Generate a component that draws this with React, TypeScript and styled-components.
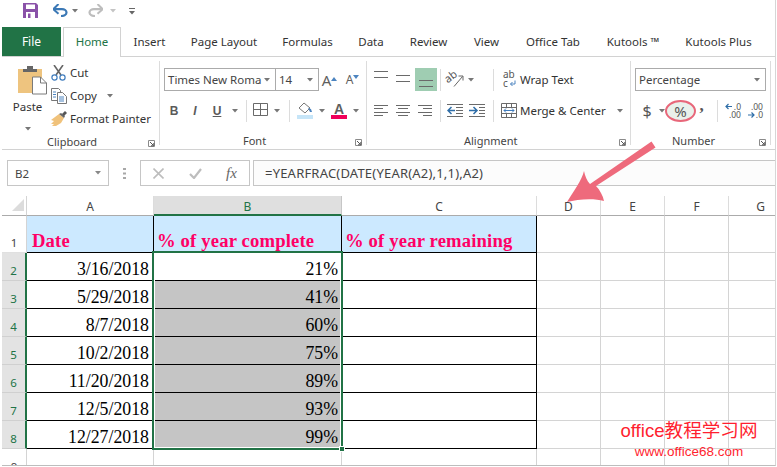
import React from "react";
import styled, { createGlobalStyle } from "styled-components";

const Global = createGlobalStyle`
  html, body { margin: 0; padding: 0; background: #fff; }
  body { font-family: "Noto Sans", "Open Sans", sans-serif; }
`;

const UI = `"Noto Sans", "Open Sans", sans-serif`;
const SERIF = `"Liberation Serif", "Times New Roman", serif`;
const GREEN = "#217346";

const Page = styled.div`
  width: 777px;
  height: 467px;
  overflow: hidden;
  position: relative;
  background: #fff;
`;
const Frame = styled.div`
  width: 774px;
  height: 466px;
  margin-left: 2px;
  box-sizing: border-box;
  border-right: 1px solid #d6d6d6;
  border-bottom: 1px solid #bdbdbd;
  overflow: hidden;
  position: relative;
`;

/* Quick access */
const Qat = styled.div`
  height: 27px;
  display: flex;
  align-items: flex-start;
  padding: 3px 0 0 21px;
  box-sizing: border-box;
`;
const QatBtn = styled.div<{ $w: number }>`
  width: ${(p) => p.$w}px;
  height: 15px;
  display: flex;
  align-items: center;
  justify-content: flex-start;
  flex: none;
`;

/* Tabs */
const TabBar = styled.div`
  height: 30px;
  display: flex;
  box-sizing: border-box;
  border-bottom: 1px solid #d2d2d2;
`;
const FileTab = styled.div`
  width: 59px;
  height: 29px;
  margin-right: 2px;
  background: ${GREEN};
  color: #fff;
  font: 12px/29px ${UI};
  text-align: center;
`;
const Tab = styled.div<{ $w: number; $active?: boolean }>`
  width: ${(p) => p.$w}px;
  height: ${(p) => (p.$active ? 30 : 29)}px;
  box-sizing: border-box;
  font: 11.5px/28px ${UI};
  text-align: center;
  white-space: nowrap;
  color: ${(p) => (p.$active ? GREEN : "#333")};
  background: #fff;
  border: ${(p) => (p.$active ? "1px solid #d2d2d2" : "none")};
  border-bottom: none;
  line-height: ${(p) => (p.$active ? 27 : 29)}px;
`;

/* Ribbon */
const Ribbon = styled.div`
  height: 93px;
  box-sizing: border-box;
  border-bottom: 1px solid #d2d2d2;
  padding-top: 4px;
  display: flex;
  align-items: flex-start;
`;
const Group = styled.div<{ $w: number }>`
  width: ${(p) => p.$w}px;
  height: 84px;
  box-sizing: border-box;
  border-right: 1px solid #dcdcdc;
  display: flex;
  flex-direction: column;
  flex: none;
`;
const GroupBody = styled.div<{ $pl: number; $pt: number; $gap?: number }>`
  flex: 1;
  padding: ${(p) => p.$pt}px 0 0 ${(p) => p.$pl}px;
  display: flex;
  flex-direction: column;
  gap: ${(p) => p.$gap ?? 8}px;
  min-height: 0;
`;
const LabelRow = styled.div<{ $pl: number }>`
  height: 16px;
  margin-bottom: -4px;
  padding-left: ${(p) => p.$pl}px;
  padding-right: 4px;
  display: flex;
  align-items: center;
  font: 11px/16px ${UI};
  color: #444;
`;
const Launcher = styled.svg`
  margin-left: auto;
  margin-top: 3px;
  width: 7px;
  height: 7px;
`;
const ClipBody = styled.div`
  flex: 1;
  display: flex;
  padding-left: 11px;
`;
const PasteCol = styled.div`
  width: 38px;
  display: flex;
  flex-direction: column;
  align-items: center;
  padding-top: 4px;
  font: 11.5px/15px ${UI};
  color: #333;
`;
const PasteLabel = styled.div`
  margin-top: 4px;
  margin-left: -9px;
`;
const PasteCaret = styled.div`
  margin: 5px 0 0 -9px;
`;
const SmallCol = styled.div`
  display: flex;
  flex-direction: column;
  margin-left: -1px;
`;
const SmallRow = styled.div`
  height: 23px;
  display: flex;
  align-items: center;
  gap: 3px;
  font: 11.5px/23px ${UI};
  color: #333;
  white-space: nowrap;
`;
const IconSlot = styled.div`
  width: 17px;
  height: 16px;
  display: flex;
  align-items: center;
  justify-content: center;
`;
const CopyCaret = styled.span`
  display: inline-flex;
  margin-left: 7px;
`;
const Row = styled.div`
  height: 23px;
  display: flex;
  align-items: center;
`;
const Combo = styled.div<{ $w: number }>`
  width: ${(p) => p.$w}px;
  height: 23px;
  box-sizing: border-box;
  border: 1px solid #ababab;
  margin-right: -1px;
  display: flex;
  align-items: center;
  justify-content: space-between;
  padding: 0 5px 0 3px;
  font: 11.5px/21px ${UI};
  color: #444;
  white-space: nowrap;
  overflow: hidden;
  flex: none;
`;
const Btn = styled.div<{ $w: number; $on?: boolean }>`
  width: ${(p) => p.$w}px;
  height: 23px;
  flex: none;
  display: flex;
  align-items: center;
  justify-content: center;
  background: ${(p) => (p.$on ? "#9fcdb2" : "transparent")};
`;
const VSep = styled.div<{ $l: number; $r: number }>`
  width: 1px;
  height: 22px;
  background: #dcdcdc;
  margin: 0 ${(p) => p.$r}px 0 ${(p) => p.$l}px;
  flex: none;
`;
const FaceLetter = styled.span<{ $i?: boolean; $u?: boolean }>`
  font: ${(p) => (p.$i ? "italic " : "")}bold 12px/14px "Liberation Sans", sans-serif;
  color: #5a5a5a;
  text-decoration: ${(p) => (p.$u ? "underline" : "none")};
`;
const BigA = styled.span<{ $size: number }>`
  font: ${(p) => p.$size}px/18px "Noto Sans", sans-serif;
  color: #5f5f5f;
`;
const StackA = styled.div`
  display: flex;
  align-items: flex-end;
`;
const BtnText = styled.div<{ $w: number; $ml: number }>`
  width: ${(p) => p.$w}px;
  margin-left: ${(p) => p.$ml}px;
  font: 11.5px/23px ${UI};
  color: #333;
  white-space: nowrap;
  flex: none;
`;
const Dollar = styled.span`
  font: 16px/20px ${UI};
  color: #555;
`;
const PercentRing = styled.div`
  width: 31px;
  height: 22px;
  box-sizing: border-box;
  border: 2px solid #e8677a;
  border-radius: 50%;
  background: #e9f1eb;
  font: 15px/18px ${UI};
  color: #555;
  text-align: center;
  flex: none;
`;
const Comma = styled.span`
  font: bold 17px/14px "Liberation Serif", serif;
  color: #555;
  margin-top: -10px;
`;
const DecimalText = styled.text`
  font: 8.5px "Noto Sans", sans-serif;
  fill: #555;
`;
const OverSvg = styled.svg`
  overflow: visible;
  flex: none;
`;

/* Formula bar */
const FormulaBar = styled.div`
  margin-top: 10px;
  height: 26px;
  display: flex;
  align-items: stretch;
  padding-left: 5px;
`;
const NameBox = styled.div`
  width: 102px;
  box-sizing: border-box;
  border: 1px solid #c6c6c6;
  display: flex;
  align-items: center;
  justify-content: space-between;
  padding: 0 7px;
  font: 11.5px ${UI};
  color: #444;
`;
const Dots = styled.div`
  width: 31px;
  display: flex;
  align-items: center;
  justify-content: center;
`;
const FxBox = styled.div`
  width: 110px;
  box-sizing: border-box;
  border: 1px solid #c6c6c6;
  display: flex;
  align-items: center;
  gap: 25px;
  padding-left: 12px;
  margin-right: 3px;
`;
const FxGlyph = styled.span`
  font: italic 15px "Liberation Serif", serif;
  color: #666;
  margin-left: -1px;
`;
const FormulaInput = styled.div`
  flex: 1;
  border-top: 1px solid #c6c6c6;
  border-bottom: 1px solid #c6c6c6;
  border-left: 1px solid #c6c6c6;
  background: #fcfcfc;
  padding-left: 11px;
  font: 13px/24px ${UI};
  letter-spacing: 0.2px;
  color: #444;
  white-space: nowrap;
`;

/* Sheet */
const Sheet = styled.div`
  margin-top: 10px;
  position: relative;
`;
const SheetRow = styled.div<{ $h: number }>`
  height: ${(p) => p.$h}px;
  display: flex;
  box-sizing: border-box;
`;
const Corner = styled.div`
  width: 25px;
  flex: none;
  box-sizing: border-box;
  border-right: 1px solid #d4d4d4;
  border-bottom: 1px solid #ababab;
  display: flex;
  align-items: center;
  justify-content: center;
  padding: 0 0 2px 7px;
`;
const ColHead = styled.div<{ $w: number; $sel?: boolean }>`
  width: ${(p) => p.$w}px;
  flex: none;
  box-sizing: border-box;
  text-align: center;
  font: 12px/21px ${UI};
  color: ${(p) => (p.$sel ? GREEN : "#444")};
  background: ${(p) => (p.$sel ? "#dfdfdf" : "#fff")};
  border-right: 1px solid ${(p) => (p.$sel ? "#c6c6c6" : "#dcdcdc")};
  border-bottom: ${(p) => (p.$sel ? `2px solid ${GREEN}` : "1px solid #ababab")};
`;
const RowHead = styled.div<{ $sel?: boolean }>`
  width: 25px;
  flex: none;
  box-sizing: border-box;
  display: flex;
  align-items: flex-end;
  justify-content: center;
  padding-bottom: 1px;
  font: 11.5px/16px ${UI};
  color: ${(p) => (p.$sel ? GREEN : "#444")};
  background: ${(p) => (p.$sel ? "#e3e3e3" : "#fff")};
  border-right: ${(p) => (p.$sel ? `2px solid ${GREEN}` : "1px solid #d4d4d4")};
  border-bottom: 1px solid ${(p) => (p.$sel ? "#d0d0d0" : "#e0e0e0")};
`;
const Cell = styled.div<{
  $w: number;
  $kind: "head" | "data" | "plain" | "shade" | "empty";
  $pad?: number;
}>`
  width: ${(p) => p.$w}px;
  flex: none;
  box-sizing: border-box;
  display: flex;
  align-items: flex-end;
  justify-content: ${(p) => (p.$kind === "head" ? "flex-start" : "flex-end")};
  padding: ${(p) => (p.$kind === "head" ? `0 0 0 ${p.$pad ?? 3}px` : `0 ${p.$pad ?? 3}px 0 0`)};
  white-space: nowrap;
  overflow: hidden;
  color: ${(p) => (p.$kind === "head" ? "#ff0066" : "#000")};
  font: ${(p) => (p.$kind === "head" ? "bold 18.67px/22px" : "17.8px/22px")} ${SERIF};
  letter-spacing: ${(p) => (p.$kind === "head" ? "0.15px" : "0")};
  background: ${(p) =>
    p.$kind === "head" ? "#cce9ff" : p.$kind === "shade" ? "#c5c5c5" : "#fff"};
  border-right: 1px solid ${(p) => (p.$kind === "empty" ? "#d4d4d4" : "#000")};
  border-bottom: 1px solid ${(p) => (p.$kind === "empty" ? "#d4d4d4" : "#000")};
`;

/* Overlays */
const Selection = styled.div`
  position: absolute;
  left: 150px;
  top: 55px;
  width: 191px;
  height: 199px;
  box-sizing: border-box;
  border: 2px solid ${GREEN};
  box-shadow: inset 0 0 0 1px #fff;
  pointer-events: none;
`;
const Handle = styled.div`
  position: absolute;
  right: -4px;
  bottom: -4px;
  width: 6px;
  height: 6px;
  background: ${GREEN};
  border: 1px solid #fff;
  box-sizing: border-box;
`;
const Arrow = styled.svg`
  position: absolute;
  left: 0;
  top: 0;
  pointer-events: none;
`;
const Watermark = styled.div`
  position: absolute;
  left: 620px;
  top: 418px;
  width: 138px;
  color: #ff1f30;
  text-align: center;
  font-family: "Liberation Sans", "Noto Sans CJK SC", sans-serif;
  white-space: nowrap;
`;
const WmTop = styled.div`
  font-size: 18.6px;
  line-height: 26px;
`;
const WmUrl = styled.div`
  font-size: 13.5px;
  line-height: 15px;
`;

/* Icons */
const Caret = ({ c = "#777" }: { c?: string }) => (
  <svg width="6" height="4" viewBox="0 0 6 4">
    <path d="M0 0h6L3 3.5z" fill={c} />
  </svg>
);
const LauncherIcon = () => (
  <Launcher viewBox="0 0 7 7">
    <path d="M.5.5h6v6h-6z" fill="none" stroke="#8a8a8a" />
    <path d="M2 2l3.5 3.5M3 5.8h2.8V3" fill="none" stroke="#555" strokeWidth="1" />
  </Launcher>
);
const Save = () => (
  <svg width="15" height="15" viewBox="0 0 15 15">
    <path d="M0 0h13l2 2v13H0z" fill="#8a52a8" />
    <path d="M3 1.5h9v4.5H3z" fill="#fff" />
    <path d="M3 9h9v6H3z" fill="#fff" />
    <path d="M5 10.5h2.5v4.5H5z" fill="#8a52a8" />
  </svg>
);
const Undo = ({ c, flip }: { c: string; flip?: boolean }) => (
  <svg width="15" height="13" viewBox="0 0 15 13" style={flip ? { transform: "scaleX(-1)" } : undefined}>
    <path d="M1 5.2h8c2.5 0 4.5 1.4 4.5 3.4S11 12 8 12" fill="none" stroke={c} strokeWidth="2.2" />
    <path d="M5.5 0L0.3 5.2l5.2 4.6" fill="none" stroke={c} strokeWidth="2" />
  </svg>
);
const Customize = () => (
  <svg width="6" height="8" viewBox="0 0 6 8">
    <path d="M0 1.5h6" stroke="#666" strokeWidth="1" />
    <path d="M0 4h6L3 7.5z" fill="#666" />
  </svg>
);
const PasteIcon = () => (
  <svg width="29" height="30" viewBox="0 0 29 30">
    <path d="M0 4h24v24H0z" fill="#eec47f" />
    <path d="M5 4h14v3H5z" fill="#666" />
    <path d="M9 1h6v3H9z" fill="#666" />
    <path d="M14.5 12h8l6 6v11h-14z" fill="#fff" stroke="#7a7a7a" />
    <path d="M22.5 12v6h6" fill="none" stroke="#7a7a7a" />
  </svg>
);
const CutIcon = () => (
  <svg width="15" height="16" viewBox="0 0 15 16">
    <path d="M3 0l7 10M12 0L5 10" stroke="#666" strokeWidth="1.6" fill="none" />
    <circle cx="3.5" cy="12.5" r="2.6" fill="none" stroke="#3f7cbd" strokeWidth="1.2" />
    <circle cx="11.5" cy="12.5" r="2.6" fill="none" stroke="#3f7cbd" strokeWidth="1.2" />
  </svg>
);
const CopyIcon = () => (
  <svg width="16" height="16" viewBox="0 0 16 16">
    <path d="M.5.5h7l2 2v10h-9z" fill="#fff" stroke="#777" />
    <path d="M6.5 4.5h5l4 4v7h-9z" fill="#fff" stroke="#777" />
    <path d="M2 4h3M2 6.5h3M2 9h3M8 9h5M8 11h5M8 13h5" stroke="#4c84c0" />
  </svg>
);
const PainterIcon = () => (
  <svg width="17" height="15" viewBox="0 0 17 15">
    <path d="M9 3l5 4-3 5-5 3H2l2-2-3 0 3-3-3-1z" fill="#f0c27b" />
    <path d="M9 3l2-1 4 3-1 2z" fill="#666" />
    <path d="M12 3l3-3 2 2-3 3z" fill="#555" />
  </svg>
);
/* alignment glyph: lines given as [x, y, width] inside the 23px tall button */
const Lines = ({ d }: { d: [number, number, number][] }) => (
  <svg width="16" height="23" viewBox="0 0 16 23">
    {d.map(([x, y, w], i) => (
      <path key={i} d={`M${x} ${y + 0.5}h${w}`} stroke="#6a6a6a" />
    ))}
  </svg>
);
const BordersIcon = () => (
  <svg width="15" height="15" viewBox="0 0 15 15">
    <path d="M.5.5h14v12h-14zM7.5.5v12M.5 6.5h14" fill="none" stroke="#6a6a6a" />
  </svg>
);
const FillIcon = () => (
  <svg width="16" height="17" viewBox="0 0 16 17">
    <path d="M7 1l6 5-5 5-6-5z" fill="#fff" stroke="#777" />
    <path d="M11 6l3 1 1 3-2 0z" fill="#4c84c0" />
    <path d="M0 13h16v4H0z" fill="#c6e5f8" />
  </svg>
);
const ColorA = () => (
  <svg width="16" height="17" viewBox="0 0 16 17">
    <text x="8" y="11.5" textAnchor="middle" fontFamily="Liberation Sans, sans-serif" fontWeight="700" fontSize="14" fill="#5f5f5f">A</text>
    <path d="M0 13h16v4H0z" fill="#f0005a" />
  </svg>
);
const Orientation = () => (
  <OverSvg width="17" height="17" viewBox="0 0 17 17">
    <text x="0" y="10" transform="rotate(-38 4 10)" fontFamily="Noto Sans, sans-serif" fontSize="11" fill="#555">ab</text>
    <path d="M7 15.5L15.5 5.5M11.5 5h4.5v4.5" stroke="#666" fill="none" />
  </OverSvg>
);
const WrapIcon = () => (
  <OverSvg width="14" height="19" viewBox="0 0 14 19">
    <text x="0" y="7.5" fontFamily="Noto Sans, sans-serif" fontSize="10" fill="#555">ab</text>
    <text x="0" y="17" fontFamily="Noto Sans, sans-serif" fontSize="10" fill="#555">c</text>
    <path d="M12 10.5v3.5H7.5M9.5 12l-2 2 2 2" stroke="#4c84c0" fill="none" />
  </OverSvg>
);
const MergeIcon = () => (
  <svg width="16" height="15" viewBox="0 0 16 15">
    <path d="M.5.5h15v14H.5zM.5 4.5h15M.5 10.5h15M5.5.5v4M10.5.5v4M5.5 10.5v4M10.5 10.5v4" fill="none" stroke="#6a6a6a" />
    <path d="M3 7.5h10M5 5.5l-2 2 2 2M11 5.5l2 2-2 2" fill="none" stroke="#3f7cbd" />
  </svg>
);
const Indent = ({ flip }: { flip?: boolean }) => (
  <svg width="16" height="13" viewBox="0 0 16 13">
    <path d={flip ? "M0 .5h16M10 3.5h6M10 6.5h6M10 9.5h6M0 12.5h16" : "M0 .5h16M0 12.5h16"} stroke="#6a6a6a" />
    {flip ? (
      <path d="M0 6.5h7M4.5 3l3.5 3.5L4.5 10" stroke="#2f6ea8" strokeWidth="1.5" fill="none" />
    ) : (
      <>
        <path d="M9 3.5h7M9 6.5h7M9 9.5h7" stroke="#6a6a6a" />
        <path d="M8 6.5H1M4.5 3L1 6.5 4.5 10" stroke="#2f6ea8" strokeWidth="1.5" fill="none" />
      </>
    )}
  </svg>
);
const Decimal = ({ top, bottom, dir }: { top: string; bottom: string; dir: "l" | "r" }) => (
  <OverSvg width="16" height="16" viewBox="0 0 16 16">
    <DecimalText x="16" y="6.5" textAnchor="end">{top}</DecimalText>
    <DecimalText x="16" y="15" textAnchor="end">{bottom}</DecimalText>
    {dir === "l" ? (
      <path d="M7 3.5H1M3.5 1L1 3.5 3.5 6" stroke="#2f6ea8" strokeWidth="1.2" fill="none" />
    ) : (
      <path d="M1 12h6M4.5 9.5L7 12l-2.5 2.5" stroke="#2f6ea8" strokeWidth="1.2" fill="none" />
    )}
  </OverSvg>
);
const CloseX = () => (
  <svg width="11" height="11" viewBox="0 0 11 11">
    <path d="M.5.5l10 10M10.5.5l-10 10" stroke="#bdbdbd" strokeWidth="1.6" />
  </svg>
);
const Check = () => (
  <svg width="13" height="11" viewBox="0 0 13 11">
    <path d="M1 6l4 4 7-9" stroke="#bdbdbd" strokeWidth="2.2" fill="none" />
  </svg>
);
const VDots = () => (
  <svg width="3" height="11" viewBox="0 0 3 11">
    <path d="M0 0h3v2H0zM0 4.5h3v2H0zM0 9h3v2H0z" fill="#a8a8a8" />
  </svg>
);
const CornerTri = () => (
  <svg width="12" height="12" viewBox="0 0 12 12">
    <path d="M12 0v12H0z" fill="#dcdcdc" />
  </svg>
);

/* Data */
const TABS: [string, number][] = [
  ["Insert", 57], ["Page Layout", 92], ["Formulas", 75], ["Data", 52], ["Review", 63],
  ["View", 53], ["Office Tab", 80], ["Kutools ™", 80], ["Kutools Plus", 91],
];
const COLS = [127, 188, 195, 64, 64, 64, 64];
const NAMES = ["A", "B", "C", "D", "E", "F", "G"];
const ROWS: [string, string][] = [
  ["3/16/2018", "21%"], ["5/29/2018", "41%"], ["8/7/2018", "60%"], ["10/2/2018", "75%"],
  ["11/20/2018", "89%"], ["12/5/2018", "93%"], ["12/27/2018", "99%"],
];
const L = (ys: number[], xs: number[], ws: number[]) =>
  ys.map((y, i) => [xs[i], y, ws[i]] as [number, number, number]);

const Empties = () => (
  <>
    {COLS.slice(3).map((w, i) => (
      <Cell key={i} $w={w} $kind="empty" />
    ))}
  </>
);

export default function App() {
  return (
    <Page>
      <Global />
      <Frame>
        <Qat>
          <QatBtn $w={30}><Save /></QatBtn>
          <QatBtn $w={19}><Undo c="#3b78b5" /></QatBtn>
          <QatBtn $w={16}><Caret /></QatBtn>
          <QatBtn $w={22}><Undo c="#bdbdbd" flip /></QatBtn>
          <QatBtn $w={19}><Caret c="#c4c4c4" /></QatBtn>
          <QatBtn $w={10}><Customize /></QatBtn>
        </Qat>
        <TabBar>
          <FileTab>File</FileTab>
          <Tab $w={58} $active>Home</Tab>
          {TABS.map(([t, w]) => (
            <Tab key={t} $w={w}>{t}</Tab>
          ))}
        </TabBar>
        <Ribbon>
          <Group $w={158}>
            <ClipBody>
              <PasteCol>
                <PasteIcon />
                <PasteLabel>Paste</PasteLabel>
                <PasteCaret><Caret /></PasteCaret>
              </PasteCol>
              <SmallCol>
                <SmallRow><IconSlot><CutIcon /></IconSlot>Cut</SmallRow>
                <SmallRow><IconSlot><CopyIcon /></IconSlot>Copy<CopyCaret><Caret /></CopyCaret></SmallRow>
                <SmallRow><IconSlot><PainterIcon /></IconSlot>Format Painter</SmallRow>
              </SmallCol>
            </ClipBody>
            <LabelRow $pl={45}>Clipboard<LauncherIcon /></LabelRow>
          </Group>

          <Group $w={207}>
            <GroupBody $pl={4} $pt={7}>
              <Row>
                <Combo $w={112}>Times New Roma<Caret /></Combo>
                <Combo $w={44}>14<Caret /></Combo>
                <Btn $w={23}>
                  <StackA>
                    <BigA $size={15}>A</BigA>
                    <svg width="6" height="12" viewBox="0 0 6 12"><path d="M0 4l3-4 3 4z" fill="#4c84c0" /></svg>
                  </StackA>
                </Btn>
                <Btn $w={23}>
                  <StackA>
                    <BigA $size={12}>A</BigA>
                    <svg width="6" height="14" viewBox="0 0 6 14"><path d="M0 0h6L3 4z" fill="#4c84c0" /></svg>
                  </StackA>
                </Btn>
              </Row>
              <Row>
                <Btn $w={20}><FaceLetter>B</FaceLetter></Btn>
                <Btn $w={22}><FaceLetter $i>I</FaceLetter></Btn>
                <Btn $w={22}><FaceLetter $u>U</FaceLetter></Btn>
                <Btn $w={14}><Caret /></Btn>
                <VSep $l={4} $r={4} />
                <Btn $w={19}><BordersIcon /></Btn>
                <Btn $w={14}><Caret /></Btn>
                <VSep $l={5} $r={5} />
                <Btn $w={20}><FillIcon /></Btn>
                <Btn $w={13}><Caret /></Btn>
                <Btn $w={22}><ColorA /></Btn>
                <Btn $w={11}><Caret /></Btn>
              </Row>
            </GroupBody>
            <LabelRow $pl={83}>Font<LauncherIcon /></LabelRow>
          </Group>

          <Group $w={264}>
            <GroupBody $pl={4} $pt={7}>
              <Row>
                <Btn $w={22}><Lines d={L([3, 9], [0, 0], [14, 14])} /></Btn>
                <Btn $w={22}><Lines d={L([7, 13], [0, 0], [14, 14])} /></Btn>
                <Btn $w={22} $on><Lines d={L([12, 18], [1, 1], [14, 14])} /></Btn>
                <VSep $l={3} $r={3} />
                <Btn $w={22}><Orientation /></Btn>
                <Btn $w={10}><Caret /></Btn>
                <VSep $l={17} $r={9} />
                <WrapIcon />
                <BtnText $w={90} $ml={3}>Wrap Text</BtnText>
              </Row>
              <Row>
                <Btn $w={22}><Lines d={L([6, 9, 13, 16], [0, 0, 0, 0], [14, 9, 14, 9])} /></Btn>
                <Btn $w={22}><Lines d={L([6, 9, 13, 16], [0, 2, 0, 2], [14, 10, 14, 10])} /></Btn>
                <Btn $w={22}><Lines d={L([6, 9, 13, 16], [0, 5, 0, 5], [14, 9, 14, 9])} /></Btn>
                <VSep $l={3} $r={3} />
                <Btn $w={22}><Indent /></Btn>
                <Btn $w={22}><Indent flip /></Btn>
                <VSep $l={5} $r={7} />
                <MergeIcon />
                <BtnText $w={97} $ml={3}>Merge &amp; Center</BtnText>
                <Caret />
              </Row>
            </GroupBody>
            <LabelRow $pl={97}>Alignment<LauncherIcon /></LabelRow>
          </Group>

          <Group $w={140}>
            <GroupBody $pl={4} $pt={7}>
              <Combo $w={131}>Percentage<Caret /></Combo>
              <Row>
                <Btn $w={24}><Dollar>$</Dollar></Btn>
                <Btn $w={6}><Caret /></Btn>
                <PercentRing>%</PercentRing>
                <Btn $w={11}><Comma>,</Comma></Btn>
                <VSep $l={10} $r={4} />
                <Btn $w={22}><Decimal top=".0" bottom=".00" dir="l" /></Btn>
                <Btn $w={22}><Decimal top=".00" bottom=".0" dir="r" /></Btn>
              </Row>
            </GroupBody>
            <LabelRow $pl={41}>Number<LauncherIcon /></LabelRow>
          </Group>
        </Ribbon>

        <FormulaBar>
          <NameBox>B2<Caret c="#888" /></NameBox>
          <Dots><VDots /></Dots>
          <FxBox>
            <CloseX />
            <Check />
            <FxGlyph>fx</FxGlyph>
          </FxBox>
          <FormulaInput>=YEARFRAC(DATE(YEAR(A2),1,1),A2)</FormulaInput>
        </FormulaBar>

        <Sheet>
          <SheetRow $h={20}>
            <Corner><CornerTri /></Corner>
            {COLS.map((w, i) => (
              <ColHead key={i} $w={w} $sel={i === 1}>{NAMES[i]}</ColHead>
            ))}
          </SheetRow>
          <SheetRow $h={37}>
            <RowHead>1</RowHead>
            <Cell $w={COLS[0]} $kind="head" $pad={5}>Date</Cell>
            <Cell $w={COLS[1]} $kind="head">% of year complete</Cell>
            <Cell $w={COLS[2]} $kind="head">% of year remaining</Cell>
            <Empties />
          </SheetRow>
          {ROWS.map(([d, p], i) => (
            <SheetRow key={d} $h={28}>
              <RowHead $sel>{i + 2}</RowHead>
              <Cell $w={COLS[0]} $kind="data" $pad={4}>{d}</Cell>
              <Cell $w={COLS[1]} $kind={i === 0 ? "data" : "shade"}>{p}</Cell>
              <Cell $w={COLS[2]} $kind="plain" />
              <Empties />
            </SheetRow>
          ))}
          <SheetRow $h={28}>
            <RowHead>9</RowHead>
            <Cell $w={COLS[0]} $kind="empty" />
            <Cell $w={COLS[1]} $kind="empty" />
            <Cell $w={COLS[2]} $kind="empty" />
            <Empties />
          </SheetRow>
          <Selection><Handle /></Selection>
        </Sheet>
      </Frame>

      <Arrow width="777" height="467" viewBox="0 0 777 467">
        <path
          d="M651.5 141.5L655.5 147.5L596 186C600 190 603 196 604 201C594 198 578 199 567 202C573 192 582 180 584 171C585 176 587 181 590 184Z"
          fill="#ee6a7c"
        />
      </Arrow>
      <Watermark>
        <WmTop>office教程学习网</WmTop>
        <WmUrl>www.office68.com</WmUrl>
      </Watermark>
    </Page>
  );
}
